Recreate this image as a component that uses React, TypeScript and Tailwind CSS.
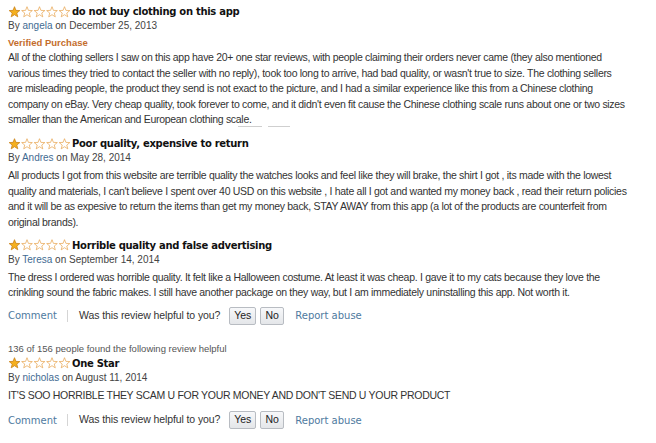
import React from 'react';

const body = "font-['Liberation_Sans',Arial,sans-serif] text-[10.5px] tracking-[-0.3px] leading-[15.5px] text-[#333] whitespace-nowrap";
const link = 'text-[#3f6b92]';

function Stars() {
  const star = (cx: number) => {
    const pts: string[] = [];
    for (let i = 0; i < 10; i++) {
      const r = i % 2 === 0 ? 5.6 : 2.4;
      const a = (Math.PI / 5) * i - Math.PI / 2;
      pts.push(`${(cx + r * Math.cos(a)).toFixed(2)},${(6.3 + r * Math.sin(a)).toFixed(2)}`);
    }
    return pts.join(' ');
  };
  return (
    <svg width="63" height="13" viewBox="0 0 63 13" className="shrink-0">
      <polygon points={star(6.5)} fill="#f5b01e" stroke="#c9831a" strokeWidth="0.8" strokeLinejoin="round" />
      {[19, 31.5, 44, 56.5].map((x) => (
        <polygon key={x} points={star(x)} fill="#fff" stroke="#e6a24a" strokeWidth="0.7" strokeLinejoin="round" />
      ))}
    </svg>
  );
}

function Title({ children }: { children: React.ReactNode }) {
  return (
    <div className="flex items-center h-[14px] gap-[1px]">
      <Stars />
      <span className="font-['DejaVu_Sans',Verdana,sans-serif] font-bold text-[10px] tracking-[-0.3px] text-[#111] leading-[14px]">
        {children}
      </span>
    </div>
  );
}

function Byline({ name, date }: { name: string; date: string }) {
  return (
    <div className="font-['Liberation_Sans',Arial,sans-serif] text-[10px] leading-[13px] text-[#444]">
      By <span className={link}>{name}</span> on {date}
    </div>
  );
}

function Btn({ children, w }: { children: React.ReactNode; w: string }) {
  return (
    <span className={`inline-flex items-center justify-center h-[18px] ${w} border border-[#b8bcc2] rounded-[2px] bg-gradient-to-b from-[#f7f8fa] to-[#e4e6e9] text-[#222] font-['Liberation_Sans',Arial,sans-serif] text-[10.5px]`}>
      {children}
    </span>
  );
}

function ActionRow({ className }: { className: string }) {
  return (
    <div className={`flex items-center h-[18px] ${className}`}>
      <span className="text-[#4e7aa0] font-['DejaVu_Sans',Verdana,sans-serif] text-[10px]">Comment</span>
      <span className="ml-[10px] mr-[11px] w-px h-[12px] bg-[#d5d5d5]" />
      <span className="text-[#333] font-['Liberation_Sans',Arial,sans-serif] text-[10.5px] tracking-[-0.1px]">Was this review helpful to you?</span>
      <div className="flex gap-[4px] ml-[9px]">
        <Btn w="w-[27px]">Yes</Btn>
        <Btn w="w-[24px]">No</Btn>
      </div>
      <span className="ml-[11px] text-[#4e7aa0] font-['DejaVu_Sans',Verdana,sans-serif] text-[10px]">Report abuse</span>
    </div>
  );
}

export default function App() {
  return (
    <div className="w-[656px] h-[443px] bg-white pl-[8px] pt-[5px] overflow-hidden">
      <Title>do not buy clothing on this app</Title>
      <Byline name="angela" date="December 25, 2013" />
      <div className="mt-[5px] font-['Liberation_Sans',Arial,sans-serif] font-bold text-[9.5px] leading-[12px] text-[#c46d2c]">
        Verified Purchase
      </div>
      <p className={`mt-[1px] ${body}`}>
        All of the clothing sellers I saw on this app have 20+ one star reviews, with people claiming their orders never came (they also mentioned
        <br />
        various times they tried to contact the seller with no reply), took too long to arrive, had bad quality, or wasn't true to size. The clothing sellers
        <br />
        are misleading people, the product they send is not exact to the picture, and I had a similar experience like this from a Chinese clothing
        <br />
        company on eBay. Very cheap quality, took forever to come, and it didn't even fit cause the Chinese clothing scale runs about one or two sizes
        <br />
        smaller than the American and European clothing scale.
      </p>
      <div className="flex gap-[6px] ml-[230px] -mt-[2px] h-px">
        <span className="w-[24px] h-px bg-[#cfcfcf]" />
        <span className="w-[22px] h-px bg-[#cfcfcf]" />
      </div>

      <div className="mt-[10.5px]">
        <Title>Poor quality, expensive to return</Title>
        <Byline name="Andres" date="May 28, 2014" />
        <p className={`mt-[4px] ${body}`}>
          All products I got from this website are terrible quality the watches looks and feel like they will brake, the shirt I got , its made with the lowest
          <br />
          quality and materials, I can't believe I spent over 40 USD on this website , I hate all I got and wanted my money back , read their return policies
          <br />
          and it will be as expesive to return the items than get my money back, STAY AWAY from this app (a lot of the products are counterfeit from
          <br />
          original brands).
        </p>
      </div>

      <div className="mt-[8.5px]">
        <Title>Horrible quality and false advertising</Title>
        <Byline name="Teresa" date="September 14, 2014" />
        <p className={`mt-[4px] ${body}`}>
          The dress I ordered was horrible quality. It felt like a Halloween costume. At least it was cheap. I gave it to my cats because they love the
          <br />
          crinkling sound the fabric makes. I still have another package on they way, but I am immediately uninstalling this app. Not worth it.
        </p>
        <ActionRow className="mt-[6px]" />
      </div>

      <div className="mt-[18px] font-['Liberation_Sans',Arial,sans-serif] text-[9.5px] leading-[12px] text-[#555]">
        136 of 156 people found the following review helpful
      </div>
      <div className="mt-[2px]">
        <Title>One Star</Title>
        <Byline name="nicholas" date="August 11, 2014" />
        <p className={`mt-[4px] ${body}`}>IT'S SOO HORRIBLE THEY SCAM U FOR YOUR MONEY AND DON'T SEND U YOUR PRODUCT</p>
        <ActionRow className="mt-[8px]" />
      </div>
    </div>
  );
}
